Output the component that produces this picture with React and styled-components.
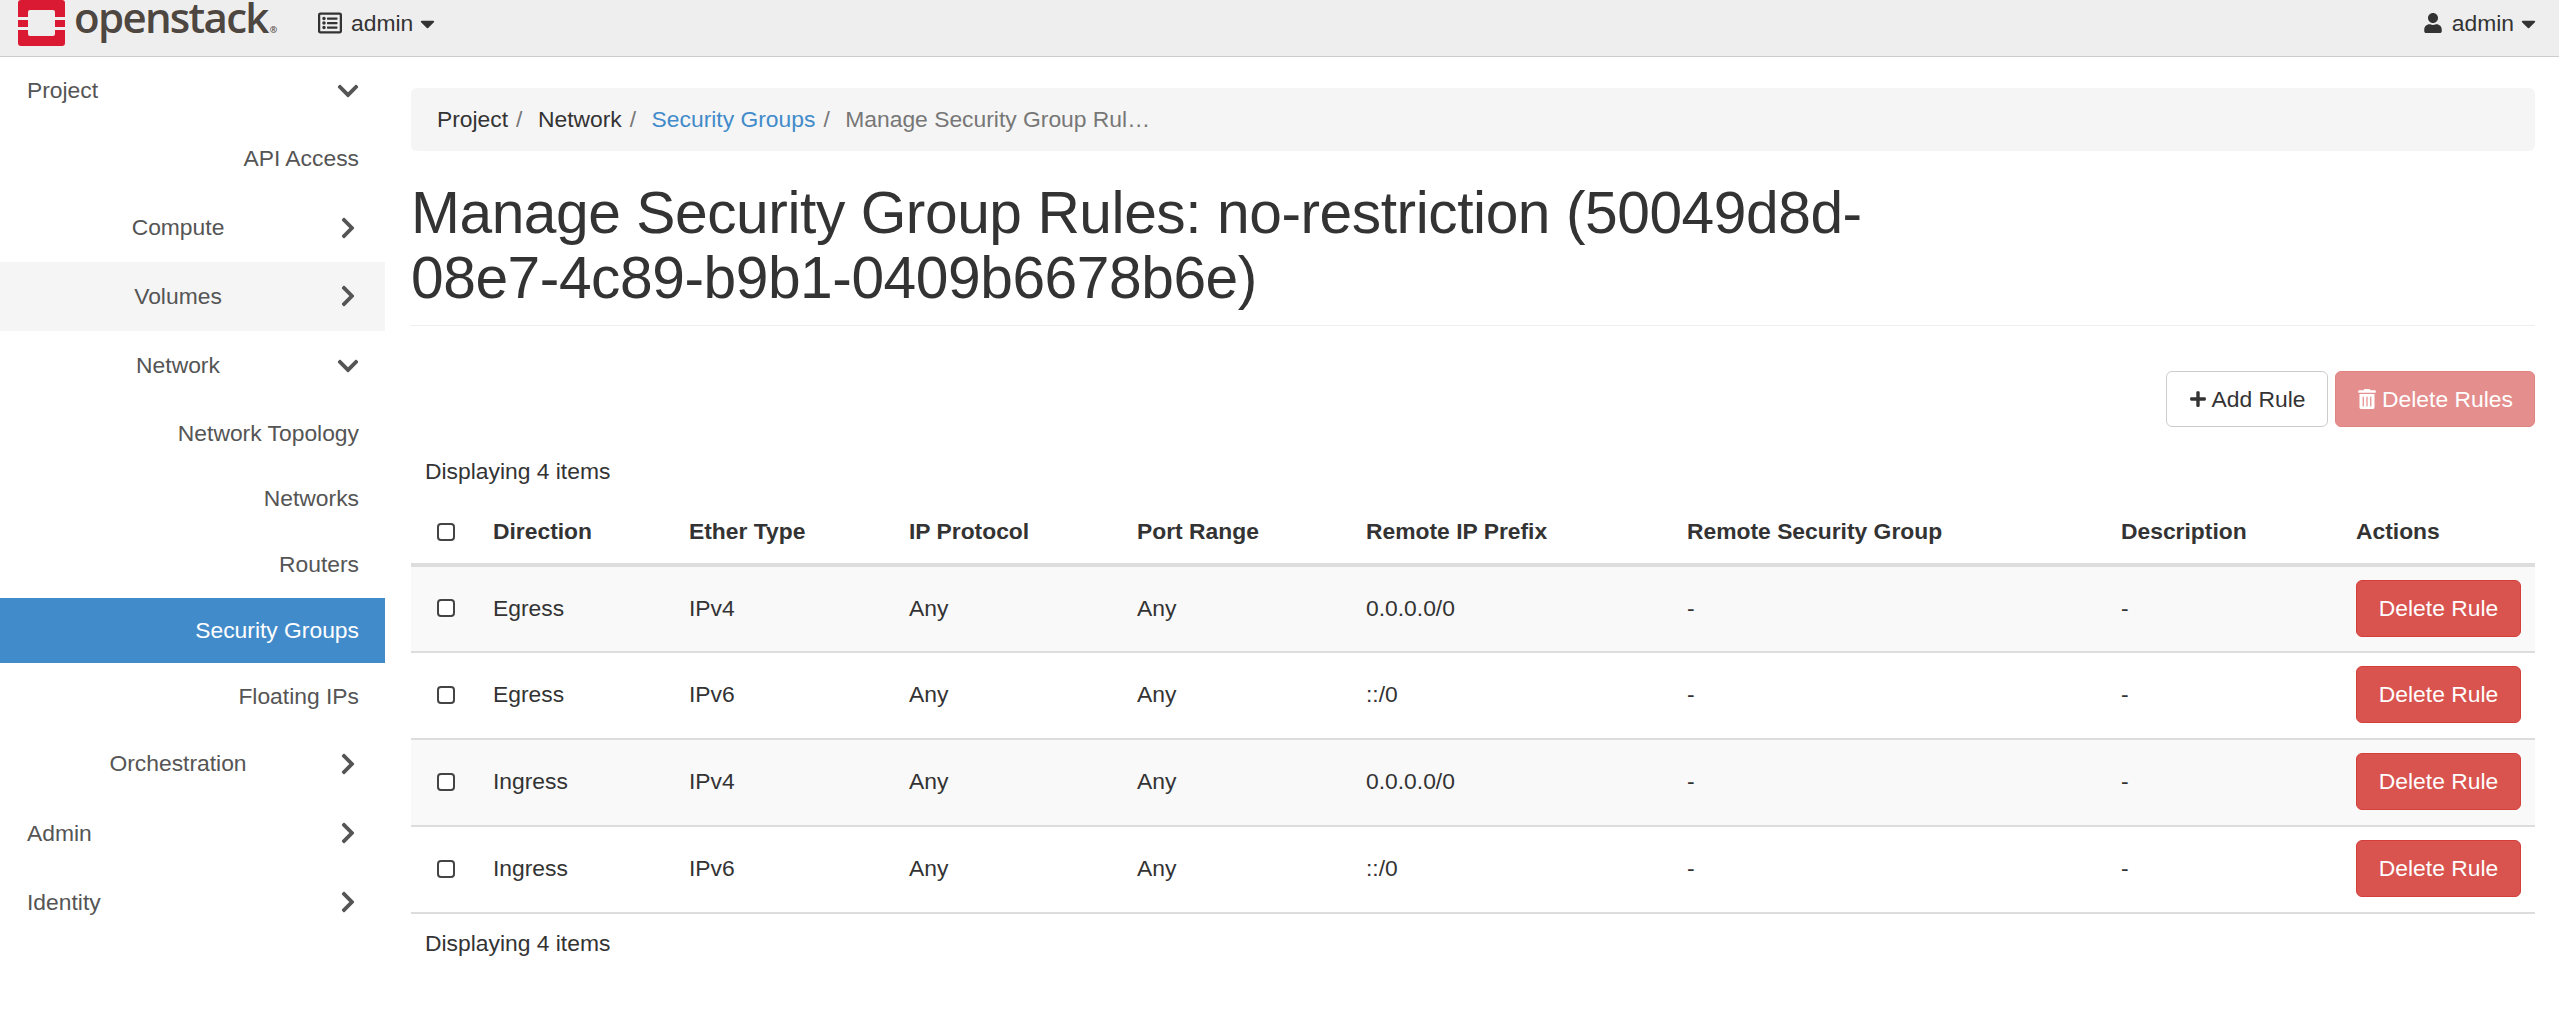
import React from 'react';
import styled, { createGlobalStyle } from 'styled-components';
import { FaChevronDown, FaChevronRight, FaRegListAlt, FaUser, FaPlus, FaTrashAlt, FaCaretDown } from 'react-icons/fa';

const rules = [
    { direction: 'Egress', ether: 'IPv4', prefix: '0.0.0.0/0' },
    { direction: 'Egress', ether: 'IPv6', prefix: '::/0' },
    { direction: 'Ingress', ether: 'IPv4', prefix: '0.0.0.0/0' },
    { direction: 'Ingress', ether: 'IPv6', prefix: '::/0' },
];

const columns = [
    ['Direction', 196],
    ['Ether Type', 220],
    ['IP Protocol', 228],
    ['Port Range', 229],
    ['Remote IP Prefix', 321],
    ['Remote Security Group', 434],
    ['Description', 235],
    ['Actions', 192],
];

const Logo = () => (
    <LogoMark viewBox="0 0 47 46">
        <path fill="#da1a32" fillRule="evenodd" d="M3 0H44a3 3 0 0 1 3 3V43a3 3 0 0 1-3 3H3a3 3 0 0 1-3-3V3a3 3 0 0 1 3-3ZM12 10a2 2 0 0 0-2 2V34a2 2 0 0 0 2 2H35a2 2 0 0 0 2-2V12a2 2 0 0 0-2-2Z" />
        <path fill="#eeeeee" d="M0 17H10V20H0ZM37 17H47V20H37ZM0 27H10V30H0ZM37 27H47V30H37Z" />
    </LogoMark>
);

const App = () => {
    return (
        <>
            <GlobalStyle />
            <TopBar>
                <Brand>
                    <Logo />
                    <Wordmark>openstack<Registered>®</Registered></Wordmark>
                </Brand>
                <TopMenu>
                    <FaRegListAlt size={24} />
                    <span>admin</span>
                    <Caret />
                </TopMenu>
                <UserMenu>
                    <FaUser size={20} />
                    <span>admin</span>
                    <Caret />
                </UserMenu>
            </TopBar>
            <Body>
                <Sidebar>
                    <SideRow $level={0} $h={67.6}>Project<Chevron><FaChevronDown /></Chevron></SideRow>
                    <SideRow $level={2}>API Access</SideRow>
                    <SideRow $level={1}>Compute<Chevron><FaChevronRight /></Chevron></SideRow>
                    <SideRow $level={1} $hover>Volumes<Chevron><FaChevronRight /></Chevron></SideRow>
                    <SideRow $level={1} $h={69.8}>Network<Chevron><FaChevronDown /></Chevron></SideRow>
                    <SideRow $level={2} $h={65.7}>Network Topology</SideRow>
                    <SideRow $level={2} $h={65.7}>Networks</SideRow>
                    <SideRow $level={2} $h={65.7}>Routers</SideRow>
                    <SideRow $level={2} $h={65.7} $active>Security Groups</SideRow>
                    <SideRow $level={2} $h={65.7}>Floating IPs</SideRow>
                    <SideRow $level={1} $h={70.2}>Orchestration<Chevron><FaChevronRight /></Chevron></SideRow>
                    <SideRow $level={0}>Admin<Chevron><FaChevronRight /></Chevron></SideRow>
                    <SideRow $level={0}>Identity<Chevron><FaChevronRight /></Chevron></SideRow>
                </Sidebar>
                <Content>
                    <Breadcrumb>
                        <Crumb>Project</Crumb>
                        <Crumb>Network</Crumb>
                        <Crumb $link>Security Groups</Crumb>
                        <Crumb $current>Manage Security Group Rul…</Crumb>
                    </Breadcrumb>
                    <Title>Manage Security Group Rules: no-restriction (50049d8d-<br />08e7-4c89-b9b1-0409b6678b6e)</Title>
                    <Actions>
                        <DefaultButton><FaPlus size={18} /> Add Rule</DefaultButton>
                        <DangerButton disabled><FaTrashAlt size={20} /> Delete Rules</DangerButton>
                    </Actions>
                    <Summary $top>Displaying 4 items</Summary>
                    <Table>
                        <colgroup>
                            <col width="69" />
                            {columns.map(([name, width]) => <col key={name} width={width} />)}
                        </colgroup>
                        <thead>
                            <tr>
                                <HeadCell><Check /></HeadCell>
                                {columns.map(([name]) => <HeadCell key={name}>{name}</HeadCell>)}
                            </tr>
                        </thead>
                        <tbody>
                            {rules.map((rule, i) => (
                                <Row key={i} $odd={i % 2 === 0}>
                                    <Cell><Check /></Cell>
                                    <Cell>{rule.direction}</Cell>
                                    <Cell>{rule.ether}</Cell>
                                    <Cell>Any</Cell>
                                    <Cell>Any</Cell>
                                    <Cell>{rule.prefix}</Cell>
                                    <Cell>-</Cell>
                                    <Cell>-</Cell>
                                    <Cell><RowButton>Delete Rule</RowButton></Cell>
                                </Row>
                            ))}
                        </tbody>
                    </Table>
                    <Summary>Displaying 4 items</Summary>
                </Content>
            </Body>
        </>
    );
};

export default App;

const GlobalStyle = createGlobalStyle`
    html, body {
        margin: 0;
        padding: 0;
        background: #fff;
    }
    body {
        font-family: "Liberation Sans", Arial, sans-serif;
        font-size: 22.85px;
        color: #333;
    }
    * {
        box-sizing: border-box;
    }
`;

const TopBar = styled.header`
    height: 57px;
    background-color: #eee;
    border-bottom: 1px solid #ccc;
    display: flex;
    align-items: center;
    padding: 0 23px 10px 0;
`;

const Brand = styled.div`
    display: flex;
    align-items: flex-start;
    height: 46px;
    margin-bottom: -10px;
    align-self: flex-start;
    padding-left: 18px;
    width: 318px;
`;

const LogoMark = styled.svg`
    width: 47px;
    height: 46px;
    display: block;
    flex: none;
`;

const Wordmark = styled.span`
    font-family: "Open Sans", sans-serif;
    font-size: 42px;
    font-weight: 600;
    line-height: 33px;
    letter-spacing: -1.7px;
    color: #4e4640;
    margin-left: 9px;
    white-space: nowrap;
`;

const Registered = styled.span`
    font-size: 9px;
    letter-spacing: 0;
    margin-left: 2px;
`;

const TopMenu = styled.div`
    display: flex;
    align-items: center;
    gap: 9px;
    color: #333;
`;

const UserMenu = styled(TopMenu)`
    margin-left: auto;
`;

const Caret = styled(FaCaretDown)`
    width: 23px;
    height: 23px;
    margin-left: -6px;
    margin-right: -4px;
`;

const Body = styled.div`
    display: flex;
    align-items: flex-start;
`;

const Sidebar = styled.nav`
    width: 385px;
    flex: none;
`;

const SideRow = styled.div`
    position: relative;
    display: flex;
    align-items: center;
    height: ${p => p.$h || 68.7}px;
    color: ${p => (p.$active ? '#fff' : '#555')};
    background-color: ${p => (p.$active ? '#428bca' : p.$hover ? '#f5f5f5' : 'transparent')};
    ${p => p.$level === 0 && 'padding-left: 27px;'}
    ${p => p.$level === 1 && 'justify-content: center; padding-right: 29px;'}
    ${p => p.$level === 2 && 'justify-content: flex-end; padding-right: 26px;'}
`;

const Chevron = styled.span`
    position: absolute;
    right: 25px;
    top: 50%;
    transform: translateY(-50%);
    display: flex;
    justify-content: center;
    width: 24px;
    font-size: 24px;
    color: #555;
`;

const Content = styled.main`
    flex: 1;
    min-width: 0;
    padding: 31px 24px 0 26px;
`;

const Breadcrumb = styled.ol`
    list-style: none;
    margin: 0;
    height: 63px;
    padding: 0 26px;
    display: flex;
    align-items: center;
    background-color: #f5f5f5;
    border-radius: 6px;
`;

const Crumb = styled.li`
    color: ${p => (p.$link ? '#428bca' : p.$current ? '#777' : '#333')};
    &:not(:last-child)::after {
        content: "/";
        color: #777;
        padding: 0 15.5px 0 8px;
    }
`;

const Title = styled.h1`
    margin: 29px 0 0;
    padding-bottom: 15px;
    border-bottom: 1px solid #eee;
    font-size: 58.7px;
    font-weight: 400;
    letter-spacing: -0.44px;
    line-height: 65px;
    color: #333;
`;

const Actions = styled.div`
    display: flex;
    justify-content: flex-end;
    gap: 7px;
    margin-top: 45px;
`;

const Button = styled.button`
    height: 56px;
    padding: 0 21px;
    font: inherit;
    border: 1px solid transparent;
    border-radius: 6px;
    display: inline-flex;
    align-items: center;
    justify-content: center;
    gap: 5px;
`;

const DefaultButton = styled(Button)`
    width: 162px;
    background-color: #fff;
    border-color: #ccc;
    color: #333;
`;

const DangerButton = styled(Button)`
    width: 200px;
    background-color: #e48f8d;
    border-color: #e08481;
    color: #fff;
`;

const RowButton = styled(Button)`
    width: 165px;
    height: 57px;
    background-color: #d9534f;
    border-color: #d43f3a;
    color: #fff;
`;

const Summary = styled.div`
    padding: 0 14px;
    height: 33px;
    line-height: 33px;
    margin-top: ${p => (p.$top ? 28 : 13)}px;
`;

const Table = styled.table`
    width: 2124px;
    table-layout: fixed;
    border-collapse: collapse;
    margin-top: 12px;
`;

const HeadCell = styled.th`
    height: 65px;
    padding: 0 13px;
    text-align: left;
    font-weight: 700;
    border-bottom: 4px solid #ddd;
`;

const Row = styled.tr`
    background-color: ${p => (p.$odd ? '#f9f9f9' : '#fff')};
`;

const Cell = styled.td`
    height: 87px;
    padding: 0 13px 2px;
    border-bottom: 2px solid #ddd;
`;

const Check = styled.span`
    display: block;
    width: 18px;
    height: 18px;
    margin-left: 13px;
    border: 2px solid #444;
    border-radius: 4px;
    background-color: #fff;
`;
